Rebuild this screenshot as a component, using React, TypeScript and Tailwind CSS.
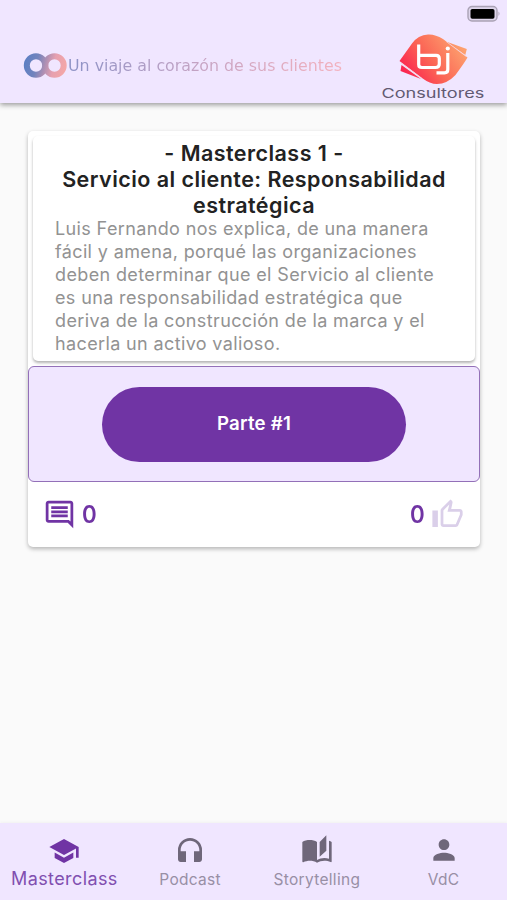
import React from "react";
import { MdSchool, MdHeadphones, MdAutoStories, MdPerson, MdOutlineComment } from "react-icons/md";

function BrandLogo() {
  return (
    <svg width="110" height="71" viewBox="378 32 110 71" role="img" aria-label="bj Consultores" className="overflow-visible">
      <defs>
        <linearGradient id="brand" x1="408" y1="78" x2="458" y2="42" gradientUnits="userSpaceOnUse">
          <stop offset="0" stopColor="#fb2450" />
          <stop offset="0.45" stopColor="#fb6455" />
          <stop offset="1" stopColor="#fda06e" />
        </linearGradient>
      </defs>
      <path d="M446 41.500L466.800 49L465.300 55ZM401.500 65L400.500 71L421 79Z" fill="url(#brand)" />
      <path
        d="M399.500 61L412 43.500Q418 35 428 34.500Q435 34 443 39L467.500 57.500Q465 62 455.500 75Q447 84 437 84Q430 84 422 78Z"
        fill="url(#brand)"
      />
      <path d="M446 41.300L466 56.300M401 63L422 78.500" stroke="#f6d3dc" strokeWidth="0.800" fill="none" />
      <path
        d="M418.700 44.500V64.500Q418.700 67.500 422 67.500H435.500Q439.300 67.500 439.300 64V58.500Q439.300 55.300 436 55.300H419M447.800 53V69.500Q447.800 72.800 444.500 72.800H436.500"
        stroke="#fff"
        strokeWidth="3.200"
        fill="none"
      />
      <circle cx="447.800" cy="48.500" r="2.100" fill="#fff" />
      <g transform="translate(381.500 97.500) scale(1.5 1)">
        <text textLength="68.500" fontSize="13" fill="#625a72" className="font-['Inter',sans-serif]" lengthAdjust="spacingAndGlyphs">
          Consultores
        </text>
      </g>
    </svg>
  );
}

function Header() {
  return (
    <header className="relative h-[103px] shrink-0 bg-[#f0e6ff] shadow-[0_2px_5px_rgba(0,0,0,0.38)]">
      <svg className="absolute top-[5px] right-[6px]" width="34" height="18" viewBox="0 0 34 18">
        <rect x="1" y="1.500" width="29" height="14.500" rx="4" fill="#ded5eb" stroke="#aaa2b5" strokeWidth="1.400" />
        <rect x="3.500" y="4" width="24" height="9.700" rx="1.800" fill="#000" />
        <path d="M31.500 6.500q2 2.200 0 4.500z" fill="#aaa2b5" />
      </svg>
      <div className="flex h-full items-start justify-between pt-8 pr-[19px] pl-[23px]">
        <div className="flex items-center pt-5">
          <svg width="45" height="27" viewBox="0 0 45 27">
            <defs>
              <linearGradient id="rings" x1="1" y1="8" x2="43" y2="18" gradientUnits="userSpaceOnUse">
                <stop offset="0" stopColor="#5b7fc4" />
                <stop offset="0.3" stopColor="#7284bd" />
                <stop offset="0.5" stopColor="#ae8fb3" />
                <stop offset="0.7" stopColor="#e6a0b0" />
                <stop offset="1" stopColor="#f5a7a6" />
              </linearGradient>
            </defs>
            <g fill="none" stroke="url(#rings)" strokeWidth="6">
              <circle cx="13" cy="13.500" r="9.200" />
              <circle cx="31.500" cy="13.500" r="9.200" />
            </g>
          </svg>
          <span className="bg-linear-to-r from-[#8c92c6] via-[#c7a4c3] to-[#f3b1bd] bg-clip-text font-['DejaVu_Sans',sans-serif] text-[15.840px] whitespace-nowrap text-transparent">
            Un viaje al corazón de sus clientes
          </span>
        </div>
        <BrandLogo />
      </div>
    </header>
  );
}

function LessonCard() {
  return (
    <article className="mr-[27px] ml-[28px] mt-[28px] h-[416px] rounded-[5px] bg-white pt-[5px] shadow-[0_2px_4px_rgba(0,0,0,0.28)]">
      <div className="mx-[5px] h-[225px] rounded-[5px] bg-white pt-[5px] shadow-[0_2px_3px_rgba(0,0,0,0.3)]">
        <h1 className="text-center text-[21.500px] leading-[25.800px] font-semibold tracking-[0.450px] whitespace-nowrap text-[#222]">
          - Masterclass 1 -<br />
          Servicio al cliente: Responsabilidad
          <br />
          estratégica
        </h1>
        <p className="pl-[22px] text-[18px] leading-[22.850px] tracking-[0.370px] whitespace-nowrap text-[#929292]">
          Luis Fernando nos explica, de una manera
          <br />
          fácil y amena, porqué las organizaciones
          <br />
          deben determinar que el Servicio al cliente
          <br />
          es una responsabilidad estratégica que
          <br />
          deriva de la construcción de la marca y el
          <br />
          hacerla un activo valioso.
        </p>
      </div>
      <div className="mt-[5px] flex h-[116px] items-center justify-center rounded-[6px] border-[1.500px] border-[#9370b8] bg-[#f0e6ff]">
        <button className="h-[75px] w-[304px] rounded-full bg-[#7034a4] text-[18.700px] font-semibold tracking-[0.200px] text-white">
          Parte #1
        </button>
      </div>
      <div className="flex h-[65px] items-center justify-between pr-[16px] pl-[15px] text-[24px] font-semibold text-[#7034a4]">
        <div className="flex items-center gap-[6px]">
          <MdOutlineComment size={33} />
          <span className="origin-left scale-x-[0.93]">0</span>
        </div>
        <div className="flex items-center gap-[6px]">
          <span className="origin-right scale-x-[0.93]">0</span>
          <svg width="33" height="33" viewBox="0 0 24 24" fill="#dacfe9">
            <path d="M9 21h9c.83 0 1.540-.5 1.840-1.220l3.020-7.050c.09-.23.14-.47.14-.73v-2c0-1.100-.9-2-2-2h-6.310l.95-4.570.03-.32c0-.41-.17-.79-.44-1.060L14.170 1 7.580 7.590C7.220 7.950 7 8.450 7 9v10c0 1.100.9 2 2 2zM9 9l4.340-4.340L12 10h9v2l-3 7H9V9zM1 9h4v12H1z" />
          </svg>
        </div>
      </div>
    </article>
  );
}

const tabs = [
  { label: "Masterclass", Icon: MdSchool },
  { label: "Podcast", Icon: MdHeadphones },
  { label: "Storytelling", Icon: MdAutoStories },
  { label: "VdC", Icon: MdPerson },
];

function BottomNav() {
  return (
    <nav className="mt-auto grid h-[77px] grid-cols-4 bg-[#f0e6ff] shadow-[0_-1px_3px_rgba(0,0,0,0.04)]">
      {tabs.map(({ label, Icon }, i) => (
        <a key={label} className={i === 0 ? "flex flex-col items-center pt-[12px] pl-[2px]" : "flex flex-col items-center pt-[11px]"}>
          <Icon size={32} className={i === 0 ? "text-[#7034a4]" : "text-[#6f677a]"} />
          <span
            className={
              i === 0
                ? "text-[18px] leading-[24px] tracking-[0.400px] text-[#814fb0]"
                : "text-[15.500px] leading-[28px] tracking-[0.300px] text-[#988fa5]"
            }
          >
            {label}
          </span>
        </a>
      ))}
    </nav>
  );
}

export default function App() {
  return (
    <div className="flex h-[900px] w-[507px] flex-col overflow-hidden bg-[#fafafa] font-['Inter',sans-serif]">
      <Header />
      <LessonCard />
      <BottomNav />
    </div>
  );
}
